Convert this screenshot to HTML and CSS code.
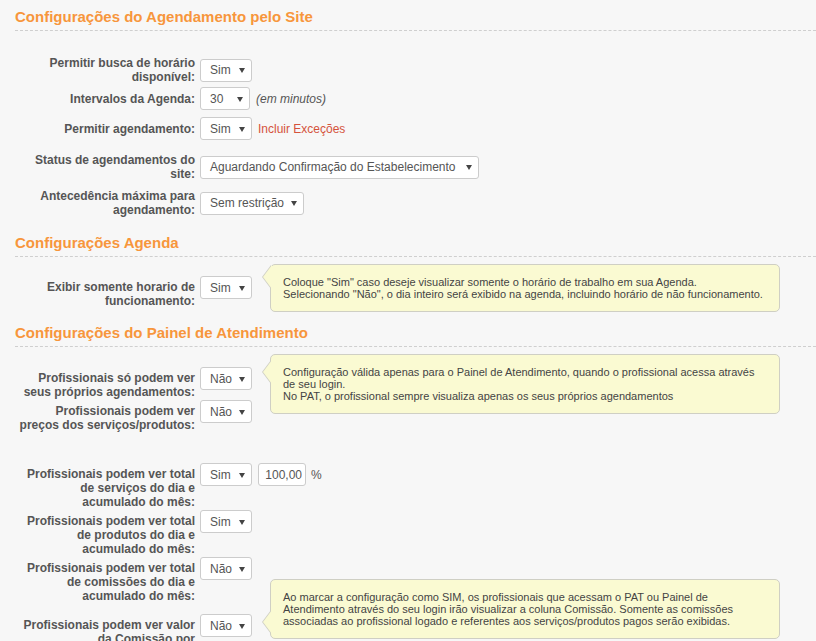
FILE: index.html
```html
<!DOCTYPE html>
<html lang="pt-BR">
<head>
<meta charset="utf-8">
<title>Configurações</title>
<link rel="stylesheet" href="styles.css">
</head>
<body>
<div class="page">

  <section class="sec">
    <h2 class="sec-title">Configurações do Agendamento pelo Site</h2>
    <div class="form form-1">
      <div class="row">
        <label class="lbl">Permitir busca de horário disponível:</label>
        <div class="field"><span class="sel sel-yn"><span>Sim</span><i class="caret"></i></span></div>
      </div>
      <div class="row mt3">
        <label class="lbl">Intervalos da Agenda:</label>
        <div class="field"><span class="sel sel-num"><span>30</span><i class="caret"></i></span><em class="hint">(em minutos)</em></div>
      </div>
      <div class="row mt7">
        <label class="lbl">Permitir agendamento:</label>
        <div class="field"><span class="sel sel-yn"><span>Sim</span><i class="caret"></i></span><a class="link">Incluir Exceções</a></div>
      </div>
      <div class="row mt13">
        <label class="lbl">Status de agendamentos do site:</label>
        <div class="field"><span class="sel sel-status"><span>Aguardando Confirmação do Estabelecimento</span><i class="caret"></i></span></div>
      </div>
      <div class="row mt8">
        <label class="lbl">Antecedência máxima para agendamento:</label>
        <div class="field"><span class="sel sel-ante"><span>Sem restrição</span><i class="caret"></i></span></div>
      </div>
    </div>
  </section>

  <section class="sec sec-2">
    <h2 class="sec-title">Configurações Agenda</h2>
    <div class="form form-2">
      <div class="row">
        <label class="lbl">Exibir somente horario de funcionamento:</label>
        <div class="field"><span class="sel sel-yn"><span>Sim</span><i class="caret"></i></span></div>
        <div class="tip tip-1">Coloque "Sim" caso deseje visualizar somente o horário de trabalho em sua Agenda.<br>Selecionando "Não", o dia inteiro será exibido na agenda, incluindo horário de não funcionamento.</div>
      </div>
    </div>
  </section>

  <section class="sec sec-3">
    <h2 class="sec-title">Configurações do Painel de Atendimento</h2>
    <div class="form form-3">
      <div class="row">
        <label class="lbl">Profissionais só podem ver seus próprios agendamentos:</label>
        <div class="field"><span class="sel sel-yn"><span>Não</span><i class="caret"></i></span></div>
        <div class="tip tip-2">Configuração válida apenas para o Painel de Atendimento, quando o profissional acessa através de seu login.<br>No PAT, o profissional sempre visualiza apenas os seus próprios agendamentos</div>
      </div>
      <div class="row">
        <label class="lbl">Profissionais podem ver preços dos serviços/produtos:</label>
        <div class="field"><span class="sel sel-yn"><span>Não</span><i class="caret"></i></span></div>
      </div>
      <div class="row mt30">
        <label class="lbl">Profissionais podem ver total de serviços do dia e acumulado do mês:</label>
        <div class="field"><span class="sel sel-yn"><span>Sim</span><i class="caret"></i></span><input class="num" type="text" value="100,00"><span class="pct">%</span></div>
      </div>
      <div class="row">
        <label class="lbl">Profissionais podem ver total de produtos do dia e acumulado do mês:</label>
        <div class="field"><span class="sel sel-yn"><span>Sim</span><i class="caret"></i></span></div>
      </div>
      <div class="row">
        <label class="lbl">Profissionais podem ver total de comissões do dia e acumulado do mês:</label>
        <div class="field"><span class="sel sel-yn"><span>Não</span><i class="caret"></i></span></div>
      </div>
      <div class="row mt10">
        <label class="lbl">Profissionais podem ver valor da Comissão por serviço/produto:</label>
        <div class="field"><span class="sel sel-yn"><span>Não</span><i class="caret"></i></span></div>
        <div class="tip tip-3">Ao marcar a configuração como SIM, os profissionais que acessam o PAT ou Painel de Atendimento através do seu login irão visualizar a coluna Comissão. Somente as comissões associadas ao profissional logado e referentes aos serviços/produtos pagos serão exibidas.</div>
      </div>
    </div>
  </section>

</div>
</body>
</html>
```

FILE: styles.css
```css
html, body {
  margin: 0;
  background: #f7f7f7;
}
html { overflow: hidden; }
body {
  font-family: "Liberation Sans", Arial, sans-serif;
  color: #555;
}
.page {
  padding: 8px 0 0 15px;
}
.sec-title {
  margin: 0;
  font-size: 15px;
  line-height: 17px;
  font-weight: bold;
  color: #f7963c;
  padding-bottom: 5px;
  border-bottom: 1px dashed #cfcfcf;
}
.sec-2 { margin-top: 17px; }
.sec-3 { margin-top: 16px; }

.form {
  display: flex;
  flex-direction: column;
}
.form-1 { margin-top: 25px; }
.form-2 { margin-top: 19px; }
.form-3 { margin-top: 20px; gap: 1px; }

.row {
  display: flex;
  align-items: flex-start;
  position: relative;
}
.form-1 .row { align-items: center; }

.mt3 { margin-top: 3px; }
.mt7 { margin-top: 7px; }
.mt8 { margin-top: 8px; }
.mt10 { margin-top: 10px; }
.mt13 { margin-top: 13px; }
.mt30 { margin-top: 30px; }

.lbl {
  flex: none;
  width: 180px;
  margin-right: 5px;
  padding-top: 4px;
  text-align: right;
  font-size: 12px;
  line-height: 14px;
  font-weight: bold;
  color: #555;
}
.form-1 .lbl { padding-top: 0; }

.field {
  display: flex;
  align-items: center;
  gap: 6px;
  font-size: 12px;
}

.sel {
  display: inline-flex;
  align-items: center;
  justify-content: space-between;
  box-sizing: border-box;
  height: 23px;
  padding: 0 6px 0 9px;
  background: #fff;
  border: 1px solid #ccc;
  border-radius: 3px;
  color: #555;
  font-size: 12px;
  white-space: nowrap;
}
.sel-yn { width: 52px; }
.sel-num { width: 50px; }
.sel-status { width: 279px; }
.sel-ante { width: 104px; }

.caret {
  width: 0;
  height: 0;
  border-left: 3px solid transparent;
  border-right: 3px solid transparent;
  border-top: 5px solid #444;
  margin-top: 1px;
}

.hint {
  font-style: italic;
  color: #555;
}
.link {
  color: #d5533c;
  cursor: pointer;
}

.num {
  box-sizing: border-box;
  width: 48px;
  height: 23px;
  margin: 0;
  padding: 0 3px;
  border: 1px solid #ccc;
  border-radius: 3px;
  background: #fff;
  text-align: right;
  font-family: "Liberation Sans", Arial, sans-serif;
  font-size: 12px;
  color: #555;
}
.pct { margin-left: -1px; color: #555; }

.tip {
  position: absolute;
  left: 255px;
  width: 510px;
  box-sizing: border-box;
  padding: 11px 12px;
  background: #fafad2;
  border: 1px solid #cfcfc4;
  border-radius: 5px;
  font-size: 11px;
  color: #444;
}
.tip::before,
.tip::after {
  content: "";
  position: absolute;
  top: var(--ay);
  width: 0;
  height: 0;
  border-style: solid;
  border-color: transparent;
  border-width: 12px 9px 12px 0;
}
.tip::before {
  left: -9px;
  border-right-color: #cfcfc4;
}
.tip::after {
  left: -7.75px;
  border-right-color: #fafad2;
}
.tip-1 { top: -12px; --ay: 0px; }
.tip-2 { top: -13px; --ay: 5px; }
.tip-3 { top: -35px; --ay: 30px; }
```
